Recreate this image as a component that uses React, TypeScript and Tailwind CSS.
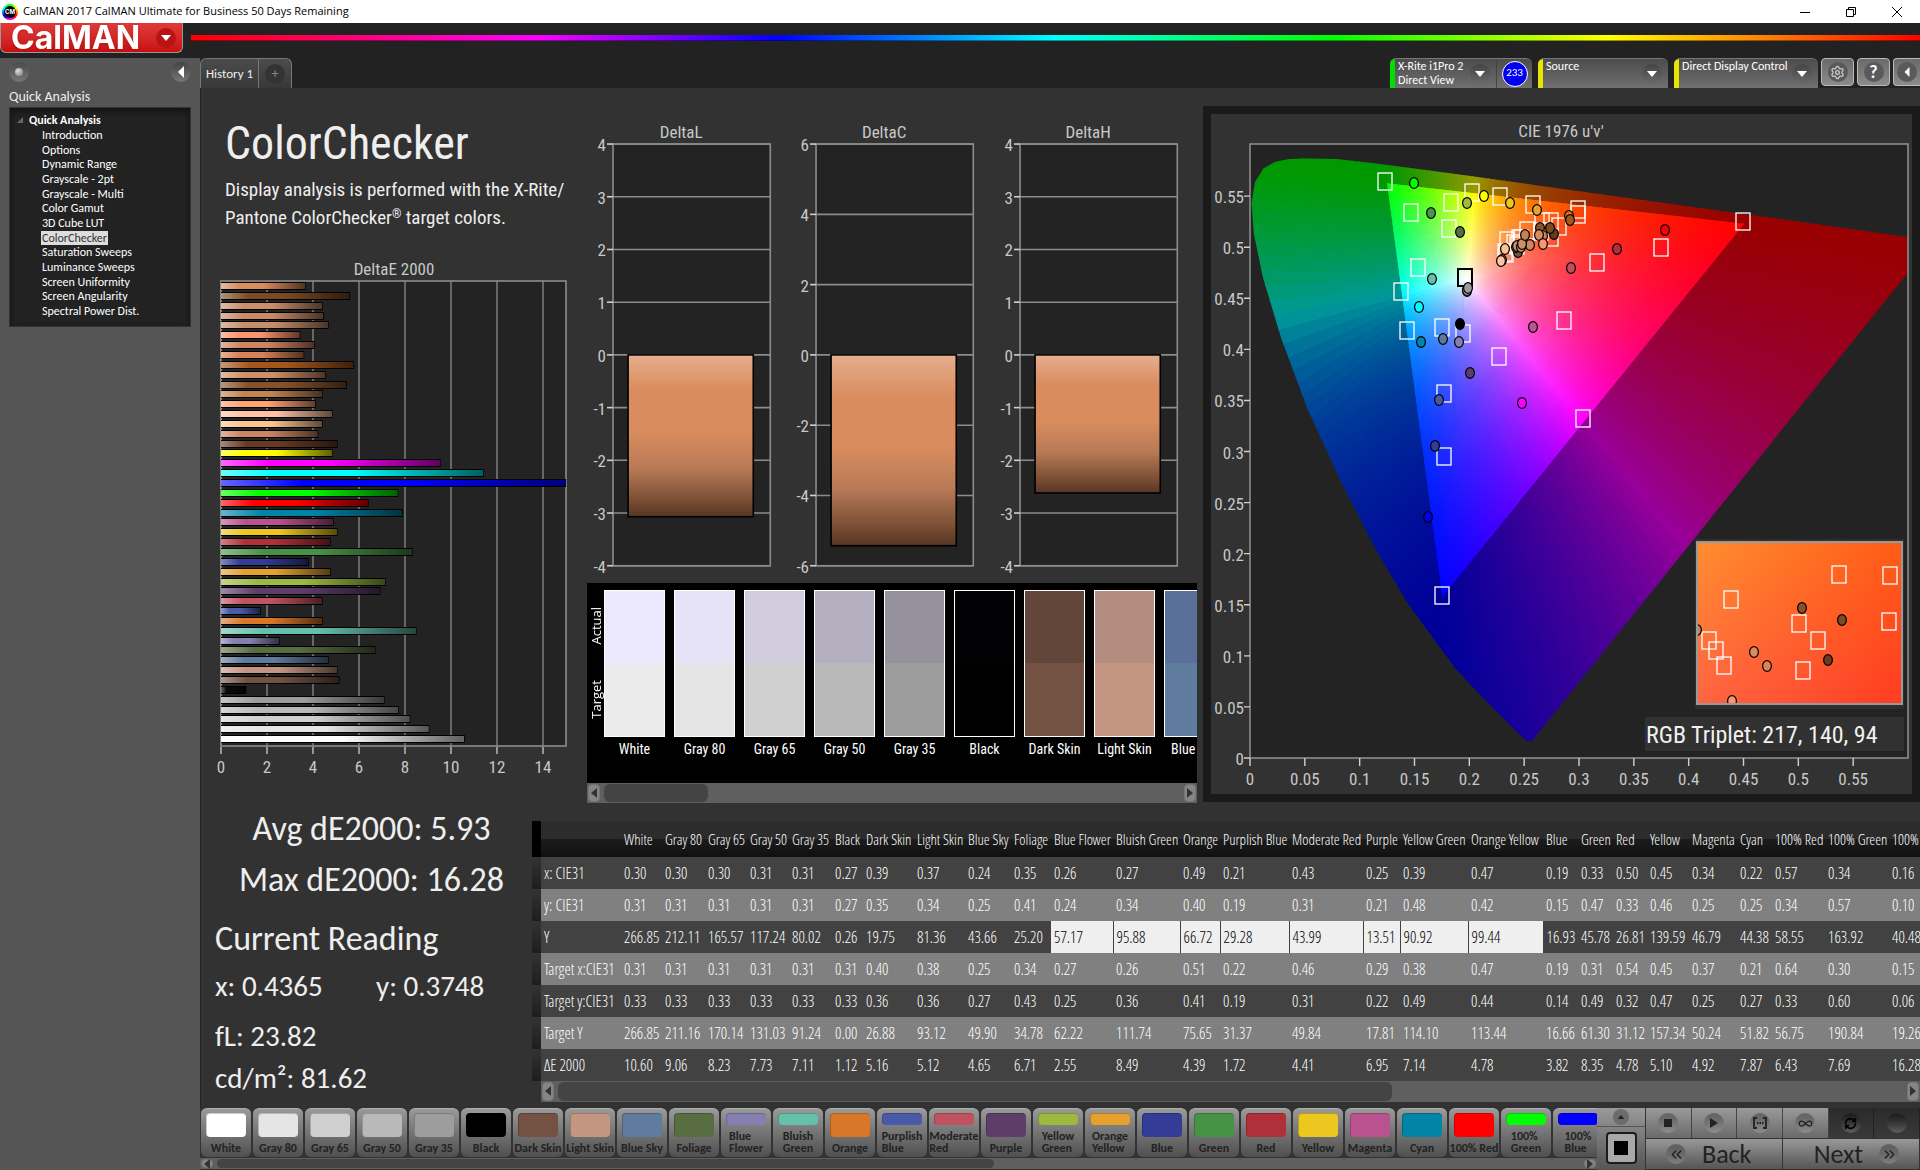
import type { ReactNode } from 'react';
import { Settings, Infinity as InfinityIcon, RefreshCw, ChevronsLeft, ChevronsRight } from 'lucide-react';

const COND = "font-[family-name:'Roboto_Condensed',Roboto,sans-serif]";
const THIN = "font-[family-name:'Open_Sans_Condensed_Light','Roboto_Condensed',Roboto,sans-serif]";
const SANS = "font-[family-name:Carlito,Lato,sans-serif]";

/* ---------- data ---------- */

const pages = [
  'Introduction', 'Options', 'Dynamic Range', 'Grayscale - 2pt', 'Grayscale - Multi', 'Color Gamut', '3D Cube LUT',
  'ColorChecker', 'Saturation Sweeps', 'Luminance Sweeps', 'Screen Uniformity', 'Screen Angularity', 'Spectral Power Dist.',
];

// top to bottom
const deltaE: [number, string][] = [
  [3.68, '#d98c5e'], [5.6, '#7a4a22'], [4.42, '#cc8e6a'], [4.47, '#c98a68'], [4.68, '#c78c69'], [3.45, '#ff9470'],
  [4.07, '#d08462'], [3.62, '#d98258'], [5.77, '#a3551c'], [4.55, '#cf9068'], [5.47, '#875229'], [4.42, '#c38350'],
  [4.12, '#ffa274'], [4.85, '#ffc2a6'], [4.42, '#ffc48e'], [4.23, '#cd8463'], [5.07, '#693a20'], [4.85, '#ffff00'],
  [9.55, '#ff00ff'], [11.42, '#00ffff'], [16.28, '#0000ff'], [7.71, '#00ff00'], [6.42, '#ff0000'], [7.9, '#0085a7'],
  [4.9, '#bb5290'], [5.07, '#ebc71f'], [4.77, '#af3038'], [8.33, '#479346'], [3.82, '#333c97'], [4.77, '#e5a02e'],
  [7.16, '#9cba40'], [6.94, '#5e3d6b'], [4.42, '#c15260'], [1.73, '#485aa8'], [4.42, '#d97729'], [8.5, '#64bfab'],
  [2.55, '#8580b2'], [6.72, '#586d42'], [4.68, '#5f7b9e'], [5.07, '#c49682'], [5.16, '#735143'], [1.1, '#0a0a0a'],
  [7.11, '#9d9d9d'], [7.73, '#b9b9b9'], [8.23, '#d0d0d0'], [9.06, '#e5e5e5'], [10.6, '#ffffff'],
];

const strip = [
  { name: 'White', actual: '#ece9ff', target: '#ebebeb' },
  { name: 'Gray 80', actual: '#e6e2f8', target: '#e5e5e5' },
  { name: 'Gray 65', actual: '#d0ccde', target: '#d0d0d0' },
  { name: 'Gray 50', actual: '#b4b0bf', target: '#b9b9b9' },
  { name: 'Gray 35', actual: '#96929d', target: '#9d9d9d' },
  { name: 'Black', actual: '#020205', target: '#000000' },
  { name: 'Dark Skin', actual: '#63463a', target: '#735143' },
  { name: 'Light Skin', actual: '#b48c80', target: '#c49682' },
  { name: 'Blue Sky', actual: '#5a709b', target: '#5f7b9e' },
];

const columns: [string, number, string[]][] = [
  ['White', 41, ['0.30', '0.31', '266.85', '0.31', '0.33', '266.85', '10.60']],
  ['Gray 80', 43, ['0.30', '0.31', '212.11', '0.31', '0.33', '211.16', '9.06']],
  ['Gray 65', 42, ['0.30', '0.31', '165.57', '0.31', '0.33', '170.14', '8.23']],
  ['Gray 50', 42, ['0.31', '0.31', '117.24', '0.31', '0.33', '131.03', '7.73']],
  ['Gray 35', 43, ['0.31', '0.31', '80.02', '0.31', '0.33', '91.24', '7.11']],
  ['Black', 31, ['0.27', '0.27', '0.26', '0.31', '0.33', '0.00', '1.12']],
  ['Dark Skin', 51, ['0.39', '0.35', '19.75', '0.40', '0.36', '26.88', '5.16']],
  ['Light Skin', 51, ['0.37', '0.34', '81.36', '0.38', '0.36', '93.12', '5.12']],
  ['Blue Sky', 46, ['0.24', '0.25', '43.66', '0.25', '0.27', '49.90', '4.65']],
  ['Foliage', 40, ['0.35', '0.41', '25.20', '0.34', '0.43', '34.78', '6.71']],
  ['Blue Flower', 62, ['0.26', '0.24', '57.17', '0.27', '0.25', '62.22', '2.55']],
  ['Bluish Green', 67, ['0.27', '0.34', '95.88', '0.26', '0.36', '111.74', '8.49']],
  ['Orange', 40, ['0.49', '0.40', '66.72', '0.51', '0.41', '75.65', '4.39']],
  ['Purplish Blue', 69, ['0.21', '0.19', '29.28', '0.22', '0.19', '31.37', '1.72']],
  ['Moderate Red', 74, ['0.43', '0.31', '43.99', '0.46', '0.31', '49.84', '4.41']],
  ['Purple', 37, ['0.25', '0.21', '13.51', '0.29', '0.22', '17.81', '6.95']],
  ['Yellow Green', 68, ['0.39', '0.48', '90.92', '0.38', '0.49', '114.10', '7.14']],
  ['Orange Yellow', 75, ['0.47', '0.42', '99.44', '0.47', '0.44', '113.44', '4.78']],
  ['Blue', 35, ['0.19', '0.15', '16.93', '0.19', '0.14', '16.66', '3.82']],
  ['Green', 35, ['0.33', '0.47', '45.78', '0.31', '0.49', '61.30', '8.35']],
  ['Red', 34, ['0.50', '0.33', '26.81', '0.54', '0.32', '31.12', '4.78']],
  ['Yellow', 42, ['0.45', '0.46', '139.59', '0.45', '0.47', '157.34', '5.10']],
  ['Magenta', 48, ['0.34', '0.25', '46.79', '0.37', '0.25', '50.24', '4.92']],
  ['Cyan', 35, ['0.22', '0.25', '44.38', '0.21', '0.27', '51.82', '7.87']],
  ['100% Red', 53, ['0.57', '0.34', '58.55', '0.64', '0.33', '56.75', '6.43']],
  ['100% Green', 64, ['0.34', '0.57', '163.92', '0.30', '0.60', '190.84', '7.69']],
  ['100% Blue', 53, ['0.16', '0.10', '40.48', '0.15', '0.06', '19.26', '16.28']],
];

const rowNames = ['x: CIE31', 'y: CIE31', 'Y', 'Target x:CIE31', 'Target y:CIE31', 'Target Y', 'ΔE 2000'];

const patches: [string, string][] = [
  ['White', '#ffffff'], ['Gray 80', '#e5e5e5'], ['Gray 65', '#d0d0d0'], ['Gray 50', '#b9b9b9'], ['Gray 35', '#9d9d9d'],
  ['Black', '#000000'], ['Dark Skin', '#735143'], ['Light Skin', '#c49682'], ['Blue Sky', '#5f7b9e'], ['Foliage', '#586d42'],
  ['Blue Flower', '#8580b2'], ['Bluish Green', '#64bfab'], ['Orange', '#d97729'], ['Purplish Blue', '#485aa8'],
  ['Moderate Red', '#c15260'], ['Purple', '#5e3d6b'], ['Yellow Green', '#9cba40'], ['Orange Yellow', '#e5a02e'],
  ['Blue', '#333c97'], ['Green', '#479346'], ['Red', '#af3038'], ['Yellow', '#ebc71f'], ['Magenta', '#bb5290'],
  ['Cyan', '#0085a7'], ['100% Red', '#ff0000'], ['100% Green', '#00ff00'], ['100% Blue', '#0000ff'],
];

/* ---------- CIE 1976 diagram ---------- */

const PW = 658;
const PH = 614;
const toX = (u: number) => (u / 0.6) * PW;
const toY = (v: number) => PH - (v / 0.601) * PH;

const locus: [number, number][] = [
  [0.2568, 0.0165], [0.2522, 0.0169], [0.2461, 0.0226], [0.2347, 0.035], [0.2161, 0.0549], [0.1877, 0.0871],
  [0.1441, 0.151], [0.1147, 0.2044], [0.0828, 0.2708], [0.0521, 0.3427], [0.0282, 0.4117], [0.0119, 0.4698],
  [0.0035, 0.5131], [0.0014, 0.5432], [0.0046, 0.5638], [0.0123, 0.577], [0.0231, 0.5837], [0.0355, 0.5862],
  [0.0501, 0.5868], [0.0792, 0.5862], [0.1127, 0.5821], [0.1531, 0.5766], [0.2026, 0.5694], [0.2623, 0.5604],
  [0.3315, 0.5501], [0.4035, 0.5393], [0.4691, 0.5296], [0.5203, 0.5219], [0.583, 0.5125], [0.6234, 0.5065],
];

const WP: [number, number] = [0.1978, 0.4683];
const primaries: [number, number][] = [[0.4507, 0.5229], [0.125, 0.5625], [0.1754, 0.1579]];

function rgbAt(u: number, v: number, k = 1) {
  const uu = Math.max(u, 0.001);
  const vv = Math.max(v, 0.012);
  const d = 6 * uu - 16 * vv + 12;
  const x = (9 * uu) / d;
  const y = (4 * vv) / d;
  const X = x / y;
  const Z = (1 - x - y) / y;
  const lin = [
    3.2406 * X - 1.5372 - 0.4986 * Z,
    -0.9689 * X + 1.8758 + 0.0415 * Z,
    0.0557 * X - 0.204 + 1.057 * Z,
  ].map((c) => Math.max(0, c));
  const max = Math.max(...lin);
  return `rgb(${lin.map((c) => Math.round((255 * k * c) / max)).join(',')})`;
}

const STEPS = 80;
const FAR = 4;
const edge: [number, number][] = primaries.flatMap((p, i) => {
  const q = primaries[(i + 1) % 3];
  return Array.from({ length: STEPS }, (_, s): [number, number] => [
    p[0] + ((q[0] - p[0]) * s) / STEPS,
    p[1] + ((q[1] - p[1]) * s) / STEPS,
  ]);
});

const wedges = edge.map((a, i) => {
  const b = edge[(i + 1) % edge.length];
  const mid: [number, number] = [(a[0] + b[0]) / 2, (a[1] + b[1]) / 2];
  const along = (p: [number, number], t: number): [number, number] => [WP[0] + (p[0] - WP[0]) * t, WP[1] + (p[1] - WP[1]) * t];
  const at = (p: [number, number]) => `${toX(p[0])},${toY(p[1])}`;
  // foot of the perpendicular from the white point, so that stops run parallel to the edge
  const [wx, wy, ax, ay] = [toX(WP[0]), toY(WP[1]), toX(a[0]), toY(a[1])];
  const dx = toX(b[0]) - ax;
  const dy = toY(b[1]) - ay;
  const s = ((wx - ax) * dx + (wy - ay) * dy) / (dx * dx + dy * dy);
  const [fx, fy] = [ax + s * dx - wx, ay + s * dy - wy];
  return {
    id: `w${i}`,
    inner: `${at(WP)} ${at(a)} ${at(b)}`,
    outer: `${at(a)} ${at(b)} ${at(along(b, FAR))} ${at(along(a, FAR))}`,
    near: [wx + fx, wy + fy],
    far: [wx + fx * FAR, wy + fy * FAR],
    stops: [0, 0.1, 0.25, 0.45, 0.65, 0.85, 1].map((t) => ({ t, c: rgbAt(...along(mid, t)) })),
    darkStops: [1, 1.15, 1.3, 1.5, 1.8, 2.2, 2.8, FAR].map((t) => ({ t: t / FAR, c: rgbAt(...along(mid, t), 0.6) })),
  };
});

const targets: [number, number][] = [
  [135, 37], [161, 68], [201, 58], [199, 84], [222, 48], [250, 52], [283, 60], [328, 65], [328, 70], [168, 123],
  [151, 147], [157, 186], [192, 183], [213, 189], [249, 212], [347, 118], [314, 176], [493, 77], [411, 103], [333, 274],
  [194, 249], [194, 312], [192, 451], [309, 82], [301, 77], [292, 77], [277, 86], [257, 96], [255, 108], [256, 109],
  [301, 93], [269, 94], [271, 94], [267, 101], [291, 87], [264, 99],
];

const readings: [number, number, string][] = [
  [164, 39, '#00ff00'], [181, 69, '#489448'], [217, 59, '#9dbc40'], [234, 52, '#ffff00'], [260, 59, '#ecc520'],
  [287, 66, '#e6a12e'], [210, 88, '#576c43'], [182, 135, '#67bfaa'], [169, 163, '#00ffff'], [171, 198, '#0088a8'],
  [193, 195, '#5d7a9c'], [209, 198, '#8480b1'], [210, 180, '#000000'], [217, 147, '#f0f0f0'], [217, 146, '#c8c8c8'],
  [218, 144, '#9a9a9a'], [220, 229, '#5c3d68'], [283, 183, '#bb5693'], [321, 124, '#c1505f'], [367, 105, '#af3038'],
  [415, 86, '#ff0000'], [272, 259, '#ff00ff'], [189, 256, '#4659a6'], [185, 302, '#333c97'], [178, 373, '#0000e6'],
  [319, 72, '#d97729'], [320, 76, '#a3551c'], [290, 84, '#875229'], [304, 90, '#693a20'], [300, 84, '#7a4a22'],
  [293, 92, '#d98258'], [289, 91, '#d98c5e'], [293, 100, '#ff9470'], [280, 101, '#d08462'], [268, 108, '#735143'],
  [266, 103, '#c49682'], [267, 102, '#c78c69'], [271, 103, '#cc8e6a'], [272, 100, '#cf9068'], [275, 91, '#c38350'],
  [252, 116, '#ffa274'], [255, 105, '#ffc48e'], [251, 117, '#ffc2a6'],
];

const insetTargets: [number, number][] = [
  [589, 430], [640, 431], [481, 455], [549, 479], [639, 477], [568, 496], [459, 496], [466, 506], [474, 521], [553, 526],
];

const insetReadings: [number, number, string][] = [
  [552, 464, '#875229'], [592, 476, '#7a4a22'], [504, 508, '#d98c5e'], [517, 522, '#d98258'], [578, 516, '#693a20'],
  [482, 557, '#ff9470'], [447, 486, '#c38350'],
];

const points = (list: [number, number][]) => list.map(([u, v]) => `${toX(u)},${toY(v)}`).join(' ');

function Target({ x, y, dark }: { x: number; y: number; dark?: boolean }) {
  return <rect x={x - 7} y={y - 8} width={14} height={17} fill="none" stroke={dark ? '#000' : '#fff'} strokeWidth={dark ? 2 : 1.3} />;
}

function Reading({ x, y, color }: { x: number; y: number; color: string }) {
  return <ellipse cx={x} cy={y} rx={4.4} ry={5.4} fill={color} stroke="#000" strokeWidth={1.2} />;
}

function CieDiagram() {
  const ticks = Array.from({ length: 12 }, (_, i) => i * 0.05);
  return (
    <svg viewBox="0 0 701 680" className={`block w-full ${COND}`} role="img" aria-label="CIE 1976 u'v'">
      <defs>
        <clipPath id="locus"><polygon points={points(locus)} /></clipPath>
        <clipPath id="gamut"><polygon points={points(primaries)} /></clipPath>
        <clipPath id="plot"><rect width={PW} height={PH} /></clipPath>
        <clipPath id="inset"><rect x={447} y={398} width={205} height={162} /></clipPath>
        {wedges.map((w) => (
          <linearGradient key={w.id} id={w.id} gradientUnits="userSpaceOnUse" x1={toX(WP[0])} y1={toY(WP[1])} x2={w.near[0]} y2={w.near[1]}>
            {w.stops.map((s) => <stop key={s.t} offset={s.t} stopColor={s.c} />)}
          </linearGradient>
        ))}
        {wedges.map((w) => (
          <linearGradient key={w.id} id={`${w.id}d`} gradientUnits="userSpaceOnUse" x1={toX(WP[0])} y1={toY(WP[1])} x2={w.far[0]} y2={w.far[1]}>
            {w.darkStops.map((s) => <stop key={s.t} offset={s.t} stopColor={s.c} />)}
          </linearGradient>
        ))}
        <linearGradient id="insetTop"><stop stopColor="#ff8e30" /><stop offset="1" stopColor="#ff5c16" /></linearGradient>
        <linearGradient id="insetBottom"><stop stopColor="#ff6444" /><stop offset="1" stopColor="#ff3c22" /></linearGradient>
        <linearGradient id="fade" x2="0" y2="1"><stop stopColor="#fff" stopOpacity="0" /><stop offset="1" stopColor="#fff" /></linearGradient>
        <mask id="fadeMask"><rect x={447} y={398} width={205} height={162} fill="url(#fade)" /></mask>
      </defs>
      <text x={350} y={23} textAnchor="middle" fontSize={17} fill="#c8c8c8">CIE 1976 u'v'</text>
      <g transform="translate(39 30)">
        <rect width={PW} height={PH} fill="#232323" />
        <g clipPath="url(#plot)">
          <g clipPath="url(#locus)">
            {wedges.map((w) => <polygon key={w.id} points={w.outer} fill={`url(#${w.id}d)`} stroke={`url(#${w.id}d)`} />)}
          </g>
          <g clipPath="url(#gamut)">
            {wedges.map((w) => <polygon key={w.id} points={w.inner} fill={`url(#${w.id})`} stroke={`url(#${w.id})`} />)}
          </g>
        </g>
        <rect width={PW} height={PH} fill="none" stroke="#8c8c8c" strokeWidth={1.6} />
        {targets.map(([x, y], i) => <Target key={i} x={x} y={y} />)}
        <Target x={215} y={133} dark />
        {readings.map(([x, y, c], i) => <Reading key={i} x={x} y={y} color={c} />)}

        <rect x={445} y={395} width={209} height={170} fill="#2e2e2e" />
        <g clipPath="url(#inset)">
          <rect x={447} y={398} width={205} height={162} fill="url(#insetTop)" />
          <rect x={447} y={398} width={205} height={162} fill="url(#insetBottom)" mask="url(#fadeMask)" />
          {insetTargets.map(([x, y], i) => <Target key={i} x={x} y={y} />)}
          {insetReadings.map(([x, y, c], i) => <Reading key={i} x={x} y={y} color={c} />)}
        </g>
        <rect x={447} y={398} width={205} height={162} fill="none" stroke="#999" strokeWidth={2} />
        <rect x={395} y={573} width={259} height={34} fill="#313131" />
        <text x={396} y={599} fontSize={24} fill="#f0f0f0">RGB Triplet: 217, 140, 94</text>

        {ticks.map((t) => (
          <g key={t} stroke="#d0d0d0" strokeWidth={1.4}>
            <path d={`M${toX(t)} ${PH}v8M0 ${toY(t)}h-6`} />
            <text x={toX(t)} y={PH + 27} textAnchor="middle" fontSize={17} fill="#c8c8c8" stroke="none">{Number(t.toFixed(2))}</text>
            <text x={-6} y={toY(t) + 7} textAnchor="end" fontSize={17} fill="#c8c8c8" stroke="none">{Number(t.toFixed(2))}</text>
          </g>
        ))}
      </g>
    </svg>
  );
}

/* ---------- bar charts ---------- */

function DeltaEChart() {
  const unit = 23;
  return (
    <svg viewBox="0 0 386 540" className={`block w-full ${COND}`} role="img" aria-label="DeltaE 2000">
      <defs>
        <linearGradient id="barShade">
          <stop stopColor="#fff" stopOpacity=".4" />
          <stop offset=".22" stopColor="#fff" stopOpacity="0" />
          <stop offset=".5" stopColor="#000" stopOpacity="0" />
          <stop offset="1" stopColor="#000" stopOpacity=".62" />
        </linearGradient>
        <clipPath id="deClip"><rect x={20} y={27} width={345} height={465} /></clipPath>
      </defs>
      <text x={193} y={21} textAnchor="middle" fontSize={17} fill="#c8c8c8">DeltaE 2000</text>
      <rect x={20} y={27} width={345} height={465} fill="#232323" stroke="#8c8c8c" strokeWidth={1.6} />
      {[0, 2, 4, 6, 8, 10, 12, 14].map((t) => (
        <g key={t}>
          <path d={`M${20 + t * unit} 27v465`} stroke="#8c8c8c" strokeWidth={1.3} />
          <path d={`M${20 + t * unit} 493v7`} stroke="#d0d0d0" strokeWidth={1.3} />
          <text x={20 + t * unit} y={519} textAnchor="middle" fontSize={17} fill="#c8c8c8">{t}</text>
        </g>
      ))}
      <g clipPath="url(#deClip)">
        {deltaE.map(([v, c], i) => (
          <g key={i} transform={`translate(20 ${Math.round(28 + i * 9.85)})`}>
            <rect width={v * unit} height={8} fill="#000" />
            <rect y={1} width={v * unit - 1} height={6} fill={c} />
            <rect y={1} width={v * unit - 1} height={6} fill="url(#barShade)" />
          </g>
        ))}
      </g>
    </svg>
  );
}

function DeltaChart({ title, max, step, value }: { title: string; max: number; step: number; value: number }) {
  const top = 36;
  const height = 421;
  const y = (v: number) => top + ((max - v) / (2 * max)) * height;
  const ticks = Array.from({ length: (2 * max) / step + 1 }, (_, i) => max - i * step);
  return (
    <svg viewBox="0 0 203 474" className={`block min-w-0 flex-1 ${COND}`} role="img" aria-label={title}>
      <defs>
        <linearGradient id={`${title}Fill`} x2="0" y2="1">
          <stop stopColor="#e6ae8e" />
          <stop offset=".22" stopColor="#d98c5e" />
          <stop offset=".48" stopColor="#d98c5e" />
          <stop offset=".7" stopColor="#b87a57" />
          <stop offset=".9" stopColor="#7a4e34" />
          <stop offset="1" stopColor="#563624" />
        </linearGradient>
      </defs>
      <text x={94} y={30} textAnchor="middle" fontSize={17} fill="#c8c8c8">{title}</text>
      <rect x={26} y={top} width={157} height={height} fill="#232323" stroke="#8c8c8c" strokeWidth={1.6} />
      {ticks.map((t) => (
        <g key={t}>
          <path d={`M26 ${y(t)}h157`} stroke="#8c8c8c" strokeWidth={1.6} />
          <path d={`M20 ${y(t)}h6`} stroke="#d0d0d0" strokeWidth={1.6} />
          <text x={19} y={y(t) + 7} textAnchor="end" fontSize={17} fill="#c8c8c8">{t}</text>
        </g>
      ))}
      <rect x={41} y={y(0)} width={125} height={y(value) - y(0)} fill={`url(#${title}Fill)`} stroke="#000" strokeWidth={1.6} />
    </svg>
  );
}

/* ---------- small parts ---------- */

function ScrollBar({ label, thumb, size }: { label: string; thumb: string; size: string }) {
  const btn = 'flex w-3 shrink-0 items-center justify-center rounded-sm border border-[#757575] bg-[#858585]';
  return (
    <div className={`flex bg-[#5f5f5f] p-px ${size}`}>
      <button type="button" aria-label={`${label} left`} className={btn}>
        <svg viewBox="0 0 6 10" className="h-2.5 w-1.5"><path d="M6 0v10L0 5z" fill="#333" /></svg>
      </button>
      <div className="mx-1 flex-1">
        <div className={`h-full rounded-md bg-[#444] ${thumb}`} />
      </div>
      <button type="button" aria-label={`${label} right`} className={btn}>
        <svg viewBox="0 0 6 10" className="h-2.5 w-1.5"><path d="M0 0v10l6-5z" fill="#333" /></svg>
      </button>
    </div>
  );
}

function Arrow() {
  return (
    <span className="flex size-5 shrink-0 items-center justify-center rounded-full bg-linear-to-b from-[#444] to-[#6a6a6a]">
      <svg viewBox="0 0 10 6" className="h-1.5 w-2.5"><path d="M0 0h10L5 6z" fill="#fff" /></svg>
    </span>
  );
}

function DropDown({ lines, bar, width, children }: { lines: string[]; bar: string; width: string; children?: ReactNode }) {
  return (
    <div className={`flex h-[30px] overflow-hidden rounded-t-md border-t border-[#777] bg-linear-to-b from-[#4c4c4c] to-[#707070] ${width}`}>
      <span className={`w-[5px] ${bar}`} />
      <button type="button" className="flex flex-1 items-center justify-between pr-1.5 pl-[3px] text-left">
        <span className="self-start text-xs leading-[14px] whitespace-nowrap text-white">
          {lines.map((l) => <span key={l} className="block">{l}</span>)}
        </span>
        <Arrow />
      </button>
      {children}
    </div>
  );
}

function Knob({ children }: { children?: ReactNode }) {
  return (
    <span className="flex size-5 shrink-0 items-center justify-center rounded-full bg-linear-to-b from-black/30 to-white/20 text-[#222]">
      {children}
    </span>
  );
}

/* ---------- regions ---------- */

function TitleBar() {
  return (
    <div className="flex h-[23px] items-center bg-white text-black">
      <span className="mx-0.5 flex size-4 items-center justify-center rounded-full bg-[conic-gradient(#0f0,#ff0,#f00,#f0f,#00f,#0ff,#0f0)]">
        <span className="flex size-3 items-center justify-center rounded-full bg-black font-[family-name:Inter,sans-serif] text-[6px] font-bold text-white">CM</span>
      </span>
      <span className="ml-[3px] font-[family-name:'Open_Sans',sans-serif] text-[11px]">CalMAN 2017 CalMAN Ultimate for Business 50 Days Remaining</span>
      <div className="ml-auto flex">
        <button type="button" aria-label="Minimize" className="flex w-[46px] justify-center">
          <svg viewBox="0 0 10 10" className="size-2.5"><path d="M0 5.5h10" stroke="#000" /></svg>
        </button>
        <button type="button" aria-label="Restore" className="flex w-[46px] justify-center">
          <svg viewBox="0 0 10 10" className="size-2.5" fill="none" stroke="#000"><path d="M.5 2.5h7v7h-7zM2.5 2.5v-2h7v7h-2" /></svg>
        </button>
        <button type="button" aria-label="Close" className="flex w-[46px] justify-center">
          <svg viewBox="0 0 10 10" className="size-2.5"><path d="M0 0l10 10M10 0L0 10" stroke="#000" /></svg>
        </button>
      </div>
    </div>
  );
}

function Header() {
  return (
    <div className="flex h-[35px] bg-[#222]">
      <button
        type="button"
        className="flex h-[30px] w-[183px] shrink-0 items-center justify-between rounded-b-md border border-t-0 border-[#999] bg-linear-to-b from-[#e03a3a] to-[#c90d0d] pr-1.5 pl-2.5"
      >
        <span className="font-[family-name:Inter,sans-serif] text-[32px] leading-[30px] font-bold text-white drop-shadow">CalMAN</span>
        <span className="flex size-5 items-center justify-center rounded-full bg-[#b81414]">
          <svg viewBox="0 0 10 6" className="h-1.5 w-2.5"><path d="M0 0h10L5 6z" fill="#fff" /></svg>
        </span>
      </button>
      <div className="mt-3 ml-2 h-[6px] flex-1 border-b border-black/40 bg-[linear-gradient(90deg,#f00,#f0f_20%,#00f_34%,#0ff_50%,#0f0_66%,#ff0_82%,#f00)]" />
    </div>
  );
}

function Sidebar() {
  return (
    <aside className="w-[200px] shrink-0 bg-[#555] px-[9px] pt-1">
      <div className="flex items-center justify-between">
        <span className="flex size-5 items-center justify-center rounded-full bg-linear-to-b from-[#4a4a4a] to-[#777]">
          <span className="size-2 rounded-full bg-[radial-gradient(circle_at_35%_35%,#ddd,#777)]" />
        </span>
        <button type="button" aria-label="Collapse" className="flex size-5 items-center justify-center rounded-full bg-linear-to-b from-[#444] to-[#777]">
          <svg viewBox="0 0 6 12" className="h-3 w-1.5"><path d="M6 0v12L0 6z" fill="#fff" /></svg>
        </button>
      </div>
      <h2 className="mt-[5px] text-sm leading-5 text-[#eee]">Quick Analysis</h2>
      <nav className="h-[220px] border border-[#333] bg-[#222] pt-[5px] shadow-[inset_0_3px_6px_#111]">
        <div className="flex items-center gap-1.5 pl-[7px] text-xs leading-[14px] font-bold text-white">
          <svg viewBox="0 0 6 6" className="size-1.5"><path d="M6 0v6H0z" fill="#666" /></svg>
          Quick Analysis
        </div>
        <ul className="mt-px flex h-[190px] flex-col justify-between pl-[31px] text-xs leading-[14px] text-white">
          {pages.map((p) => (
            <li key={p}>
              <a href="#" className={p === 'ColorChecker' ? 'block w-fit bg-[#ddd] px-px text-[#333]' : 'block px-px'}>{p}</a>
            </li>
          ))}
        </ul>
      </nav>
    </aside>
  );
}

function TopTabs() {
  return (
    <div className="flex h-[30px] items-stretch bg-[#222]">
      <button type="button" className="w-[59px] rounded-tl-md border border-b-0 border-[#777] bg-linear-to-b from-[#4c4c4c] to-[#383838] text-[13px] text-[#eee]">History 1</button>
      <button type="button" aria-label="Add history" className="flex w-[33px] items-center justify-center rounded-tr-md border border-b-0 border-l-0 border-[#777] bg-linear-to-b from-[#4c4c4c] to-[#383838]">
        <span className="flex size-5 items-center justify-center rounded-full bg-[#333] text-sm text-[#888]">+</span>
      </button>
      <div className="ml-auto flex">
        <DropDown lines={['X-Rite i1Pro 2', 'Direct View']} bar="bg-[#00e000]" width="w-[142px]">
          <span className="flex w-9 items-center justify-center border-l border-[#444]">
            <span className="flex size-[26px] items-center justify-center rounded-full border border-white bg-[#0000f0] text-[11px] text-white">233</span>
          </span>
        </DropDown>
        <div className="w-1.5" />
        <DropDown lines={['Source']} bar="bg-[#e6e600]" width="w-[130px]" />
        <div className="w-1.5" />
        <DropDown lines={['Direct Display Control']} bar="bg-[#e6e600]" width="w-[144px]" />
        <div className="ml-[3px] flex items-start gap-[3px] overflow-hidden">
          {['Settings', 'Help', 'Collapse'].map((n) => (
            <button
              key={n}
              type="button"
              aria-label={n}
              className={`flex h-7 items-center justify-center rounded border border-[#bbb] bg-linear-to-b from-[#6a6a6a] to-[#8c8c8c] ${n === 'Collapse' ? 'w-[27px] rounded-r-none border-r-0' : 'w-[33px]'}`}
            >
              <span className="flex size-5 items-center justify-center rounded-full bg-[#5a5a5a] text-white">
                {n === 'Settings' && <Settings size={15} strokeWidth={2} className="text-[#ccc]" />}
                {n === 'Help' && <span className="text-lg leading-5 font-bold">?</span>}
                {n === 'Collapse' && <svg viewBox="0 0 6 12" className="h-2.5 w-1.5"><path d="M6 0v12L0 6z" fill="#fff" /></svg>}
              </span>
            </button>
          ))}
        </div>
      </div>
    </div>
  );
}

function SwatchStrip() {
  return (
    <div className="mr-[6px] bg-black">
      <div className="flex h-[200px] overflow-hidden pt-[7px]">
        <div className="flex h-[147px] w-[17px] shrink-0 flex-row-reverse items-center justify-center">
          <div className="flex h-full flex-col justify-around font-[family-name:'Open_Sans',sans-serif] text-[13px] leading-4 font-medium text-white">
            <span className="rotate-180 [writing-mode:vertical-rl]">Actual</span>
            <span className="rotate-180 [writing-mode:vertical-rl]">Target</span>
          </div>
        </div>
        <div className="flex min-w-0 flex-1 gap-[9px] overflow-hidden">
          {strip.map((s) => (
            <figure key={s.name} className="w-[61px] shrink-0">
              <div className="flex h-[147px] flex-col border border-white">
                <div className="flex-1" style={{ backgroundColor: s.actual }} />
                <div className="flex-1" style={{ backgroundColor: s.target }} />
              </div>
              <figcaption className={`mt-0.5 text-center text-sm leading-5 whitespace-nowrap text-white ${COND}`}>{s.name}</figcaption>
            </figure>
          ))}
        </div>
      </div>
      <ScrollBar label="Scroll swatches" thumb="w-[18%]" size="h-5" />
    </div>
  );
}

function Readings() {
  return (
    <section className="w-[331px] shrink-0 pl-3.5 text-[#eee]">
      <div className="pr-3 pl-2 text-center text-[34px] leading-[51px]">
        <p>Avg dE2000: 5.93</p>
        <p>Max dE2000: 16.28</p>
      </div>
      <h2 className="mt-2 text-[34px] leading-[51px]">Current Reading</h2>
      <div className="flex text-[29px] leading-[44px]">
        <p className="w-[161px]">x: 0.4365</p>
        <p>y: 0.3748</p>
      </div>
      <p className="mt-1.5 text-[29px] leading-[44px]">fL: 23.82</p>
      <p className="text-[29px] leading-[40px]">cd/m²: 81.62</p>
    </section>
  );
}

function DataTable() {
  return (
    <section className="min-w-0 flex-1 pt-[18px]">
      <div className="overflow-hidden">
        <table className={`w-[1410px] table-fixed border-collapse text-left text-base leading-5 text-white ${THIN}`}>
          <colgroup>
            <col className="w-[9px]" />
            <col className="w-20" />
            {columns.map(([name, w]) => <col key={name} style={{ width: w }} />)}
          </colgroup>
          <thead>
            <tr className="h-9 bg-[linear-gradient(#2c2c2c_0_50%,#1c1c1c_50%,#101010)] text-[15px]">
              <td className="bg-black" />
              <td />
              {columns.map(([name]) => (
                <th key={name} scope="col" className="p-0 pl-[3px] font-normal whitespace-nowrap">{name}</th>
              ))}
            </tr>
          </thead>
          <tbody>
            {rowNames.map((row, r) => (
              <tr key={row} className={`h-8 ${r % 2 ? 'bg-[#808080]' : 'bg-[#424242]'}`}>
                <td className="bg-linear-to-b from-[#333] to-[#1e1e1e]" />
                <th scope="row" className="p-0 pl-[3px] font-normal whitespace-nowrap">{row}</th>
                {columns.map(([name, , cells], c) => (
                  <td
                    key={name}
                    className={r === 2 && c >= 10 && c <= 17 ? 'border-r border-[#424242] bg-[#efefef] p-0 pl-[3px] text-black' : 'p-0 pl-[3px]'}
                  >
                    {cells[r]}
                  </td>
                ))}
              </tr>
            ))}
          </tbody>
        </table>
      </div>
      <div className="pl-[9px]">
        <ScrollBar label="Scroll table" thumb="w-[62%]" size="h-[21px]" />
      </div>
    </section>
  );
}

function Patches() {
  return (
    <div className="min-w-0 flex-1">
      <div className="flex gap-0.5 overflow-hidden pl-px">
        {patches.map(([name, color]) => {
          const wrapped = name.length > 10 || name === 'Blue Flower' || name === '100% Blue' || name === '100% Green';
          return (
            <button
              key={name}
              type="button"
              className="flex h-[49px] w-[50px] shrink-0 flex-col items-center justify-between rounded-md border-t border-[#b0b0b0] bg-linear-to-b from-[#999] to-[#505050] pt-1 pb-[3px] text-xs leading-3 font-bold text-[#222]"
            >
              <span
                className={`w-10 rounded-sm border-t border-l border-black/20 ${wrapped ? 'h-3' : 'h-6'}`}
                style={{ backgroundColor: color }}
              />
              {wrapped ? (
                <span className="text-left">
                  {name.split(' ').map((w) => <span key={w} className="block">{w}</span>)}
                </span>
              ) : (
                <span className="whitespace-nowrap">{name}</span>
              )}
            </button>
          );
        })}
      </div>
      <ScrollBar label="Scroll patches" thumb="w-[57%]" size="mt-px h-[11px]" />
    </div>
  );
}

function Transport() {
  const key = 'flex h-[30px] items-center justify-center border-r border-[#444] bg-linear-to-b from-[#9a9a9a] to-[#6a6a6a]';
  const off = 'flex h-[30px] items-center justify-center border-r border-[#222] bg-linear-to-b from-[#2a2a2a] to-[#3a3a3a]';
  const nav = 'flex h-[30px] items-center gap-4 border-r border-[#333] bg-linear-to-b from-[#999] to-[#555] px-5 text-[26px] leading-7 text-[#222]';
  return (
    <div className="flex w-[323px] shrink-0">
      <div className="flex w-[49px] flex-col border-r border-[#333] bg-linear-to-b from-[#9a9a9a] to-[#555]">
        <button type="button" aria-label="Expand" className="flex h-[19px] items-center justify-center border-b border-[#555]">
          <span className="flex size-4 items-center justify-center rounded-full bg-[#6c6c6c]">
            <svg viewBox="0 0 10 6" className="h-1 w-2"><path d="M5 0l5 6H0z" fill="#222" /></svg>
          </span>
        </button>
        <button type="button" aria-label="Read window" className="mx-auto mt-[5px] flex h-8 w-[31px] items-center justify-center rounded border-2 border-[#1c1c1c] bg-[#a8a8a8]">
          <span className="size-3.5 bg-black" />
        </button>
      </div>
      <div className="flex-1">
        <div className="grid grid-cols-6">
          <button type="button" aria-label="Stop" className={key}><Knob><span className="size-2 bg-[#222]" /></Knob></button>
          <button type="button" aria-label="Play" className={key}>
            <Knob><svg viewBox="0 0 8 10" className="h-2.5 w-2"><path d="M0 0l8 5-8 5z" fill="#222" /></svg></Knob>
          </button>
          <button type="button" aria-label="Read series" className={key}>
            <Knob>
              <svg viewBox="0 0 14 12" className="h-3 w-3.5" fill="none" stroke="#222" strokeWidth="1.8">
                <path d="M4 1H1v10h3M10 1h3v10h-3M4 6h1.500M6.500 6h1.500M9 6h1.500" />
              </svg>
            </Knob>
          </button>
          <button type="button" aria-label="Read continuous" className={key}><Knob><InfinityIcon size={15} /></Knob></button>
          <button type="button" aria-label="Refresh" className={off}><Knob><RefreshCw size={13} strokeWidth={3} className="text-black" /></Knob></button>
          <button type="button" aria-label="Status" className={off}><Knob /></button>
        </div>
        <div className="mt-px grid grid-cols-2">
          <button type="button" className={nav}><Knob><ChevronsLeft size={17} /></Knob>Back</button>
          <button type="button" className={`${nav} justify-end`}>Next<Knob><ChevronsRight size={17} /></Knob></button>
        </div>
      </div>
    </div>
  );
}

export default function App() {
  return (
    <div className={`flex min-h-screen flex-col overflow-hidden bg-[#222] ${SANS}`}>
      <TitleBar />
      <Header />
      <div className="flex flex-1">
        <Sidebar />
        <div className="flex min-w-0 flex-1 flex-col">
          <TopTabs />
          <main className="flex-1 border-l border-[#222] bg-[#323232]">
            <div className="flex">
              <section className="min-w-0 flex-[386]">
                <div className="pt-[22px] pl-6 text-[#eee]">
                  <h1 className={`text-[46px] leading-[66px] ${COND}`}>ColorChecker</h1>
                  <p className={`text-[19px] leading-7 whitespace-nowrap ${COND}`}>
                    Display analysis is performed with the X-Rite/
                    <br />
                    Pantone ColorChecker<sup className="text-xs leading-none">®</sup> target colors.
                  </p>
                </div>
                <div className="mt-[22px]"><DeltaEChart /></div>
              </section>
              <section className="min-w-0 flex-[616] pt-5">
                <div className="flex pr-[6px]">
                  <DeltaChart title="DeltaL" max={4} step={1} value={-3.07} />
                  <DeltaChart title="DeltaC" max={6} step={2} value={-5.43} />
                  <DeltaChart title="DeltaH" max={4} step={1} value={-2.62} />
                </div>
                <SwatchStrip />
              </section>
              <section className="mt-[18px] min-w-0 flex-[701] self-start border-8 border-[#1a1a1a]">
                <CieDiagram />
              </section>
            </div>
            <div className="flex">
              <Readings />
              <DataTable />
            </div>
          </main>
          <footer className="flex h-[62px] bg-[#333]">
            <Patches />
            <Transport />
          </footer>
        </div>
      </div>
    </div>
  );
}
